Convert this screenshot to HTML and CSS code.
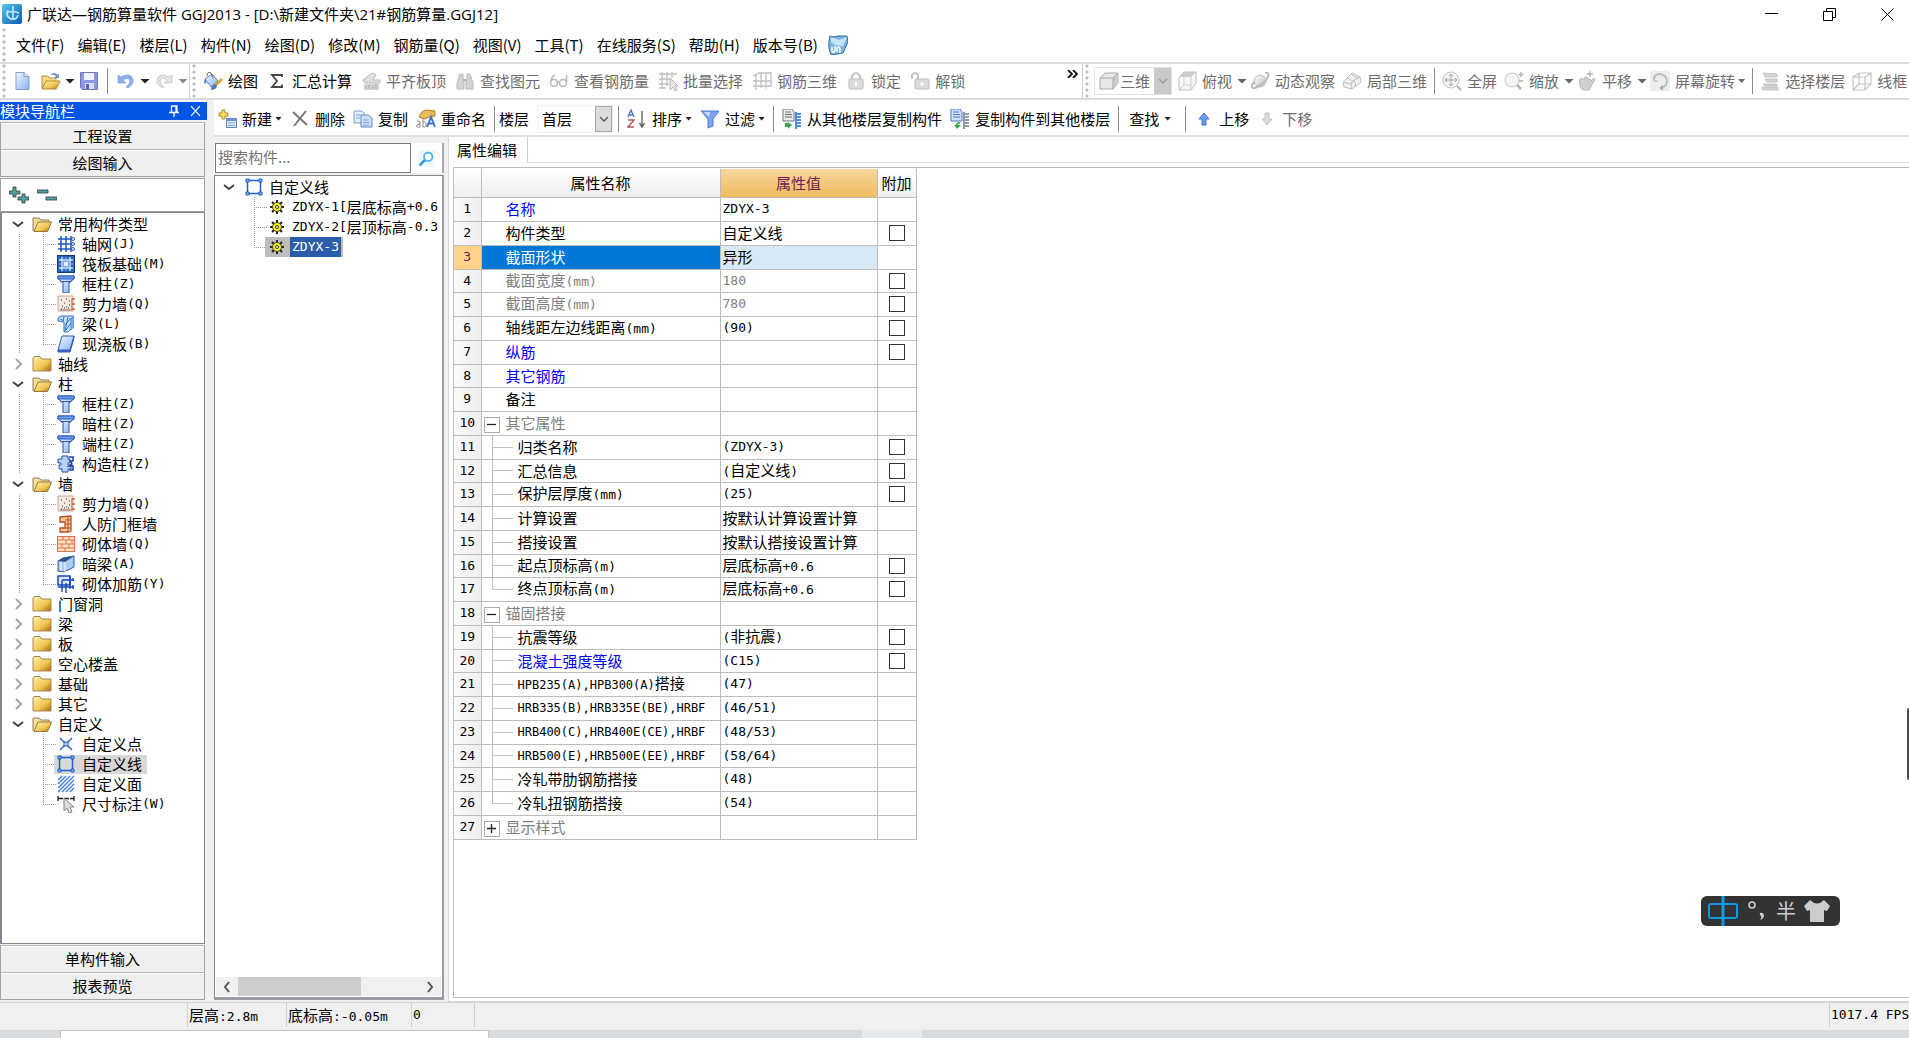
FILE: index.html
```html
<!DOCTYPE html>
<html lang="zh-CN">
<head>
<meta charset="utf-8">
<title>广联达—钢筋算量软件 GGJ2013</title>
<link rel="stylesheet" href="styles.css">
</head>
<body>
<svg class="defs" aria-hidden="true">
  <defs>
    <linearGradient id="gold" x1="0" y1="0" x2="1" y2="1"><stop offset="0" stop-color="#fff0b0"/><stop offset=".6" stop-color="#f2c550"/><stop offset="1" stop-color="#a86a10"/></linearGradient>
    <linearGradient id="blue" x1="0" y1="0" x2="1" y2="1"><stop offset="0" stop-color="#f4f9ff"/><stop offset="1" stop-color="#86b2f0"/></linearGradient>
    <linearGradient id="grey" x1="0" y1="0" x2="1" y2="1"><stop offset="0" stop-color="#fafafa"/><stop offset="1" stop-color="#c4c4c4"/></linearGradient>
    <linearGradient id="app" x1="0" y1="0" x2="1" y2="1"><stop offset="0" stop-color="#58c4f0"/><stop offset="1" stop-color="#0a5cae"/></linearGradient>
  </defs>
  <symbol id="i-app" viewBox="0 0 20 20"><rect width="20" height="20" rx="2" fill="url(#app)"/><path d="M11 2v14M4 9q7-3 13 0M6 6q-3 6 3 9 6 1 7-4" fill="none" stroke="#bfe8fb" stroke-width="1.6"/></symbol>
  <symbol id="i-doc" viewBox="0 0 20 20"><path d="M4 1.500h8l5 4v13H4z" fill="url(#blue)" stroke="#8a9cba"/><path d="M12 1.500v4h5" fill="#dbe7f8" stroke="#8a9cba"/></symbol>
  <symbol id="i-open" viewBox="0 0 20 20"><path d="M1 17V5h6l1.500 2H15v3" fill="#f6d98a" stroke="#b99337"/><path d="M1 18l4-8h14l-4 8z" fill="url(#gold)" stroke="#b98a2c"/><path d="M9 4q4-4 8 0l1-2v5h-5l2-2q-3-2-6-1" fill="#6f97c8"/></symbol>
  <symbol id="i-save" viewBox="0 0 20 20"><path d="M1.500 1.500h17v17h-15l-2-2z" fill="#8f97e2" stroke="#6d74c4"/><rect x="5" y="2" width="10" height="7" fill="#f1f3ff"/><rect x="6" y="12" width="9" height="6" fill="#d7dbf5"/><rect x="7" y="13" width="3" height="5" fill="#5b63b8"/></symbol>
  <symbol id="i-undo" viewBox="0 0 20 20"><path d="M2 4v8h8L7 9q6-4 7 1 0 3-4 6l2 1q6-4 5-9-3-7-12-2z" fill="#8bb0f0" stroke="#6d92d8" stroke-width=".6"/></symbol>
  <symbol id="i-redo" viewBox="0 0 20 20"><path d="M18 4v8h-8l3-3q-6-4-7 1 0 3 4 6l-2 1Q2 13 3 8q3-7 12-2z" fill="#e2e2e2" stroke="#c8c8c8" stroke-width=".8"/></symbol>
  <symbol id="i-paint" viewBox="0 0 20 20"><path d="M2 8l7-5 6 7-7 6z" fill="url(#blue)" stroke="#5f7fae"/><path d="M4 5q0-5 4-3l2 5" fill="none" stroke="#666"/><path d="M2 8q-2 4 0 5 2-1 1-4" fill="#5b84d2"/><path d="M19 8l-7 7" stroke="#d9a62e" stroke-width="2.500"/><path d="M12 13q-4 1-4 6 5 0 6-4z" fill="#4e78c8"/></symbol>
  <symbol id="i-sum" viewBox="0 0 20 20"><path d="M15 6V4H5l5 6-5 6h10v-2.500" fill="none" stroke="#444" stroke-width="1.800"/></symbol>
  <symbol id="i-slab" viewBox="0 0 20 20"><path d="M2 9l9-7 4 2-3 5h7v3H4z" fill="#dedede" stroke="#bbb"/><path d="M3 13h15v6H3z" fill="#d4d4d4"/><path d="M5 18v-3M8 18v-4M12 18v-3M15 18v-5" stroke="#aaa"/></symbol>
  <symbol id="i-find" viewBox="0 0 20 20"><path d="M5 3h3v5l1 2v8H2v-6zM12 3h3l3 9v6h-7v-8l1-2z" fill="#d4d4d4" stroke="#b8b8b8"/><path d="M8 9h4" stroke="#b4b4b4" stroke-width="2"/></symbol>
  <symbol id="i-glass" viewBox="0 0 20 20"><g fill="none" stroke="#bcbcbc" stroke-width="1.600"><circle cx="5" cy="12" r="3.500"/><circle cx="14" cy="12" r="3.500"/><path d="M8.500 11q1-1 2 0M1.500 11Q3 5 6 4M17.500 11V4"/></g></symbol>
  <symbol id="i-batch" viewBox="0 0 20 20"><path d="M1 3h18M1 8h12M1 13h10M4 1v17M9 1v14M14 1v6M1 17h7" stroke="#c0c0c0" fill="none" stroke-width="1.300"/><path d="M12 7v12l3-3 2 4 2-1-2-4h3z" fill="#e8e8e8" stroke="#b4b4b4"/></symbol>
  <symbol id="i-cage" viewBox="0 0 20 20"><path d="M1 5l6-3h12M1 10h18M1 15h18M4 3v16M9 1v16M14 2v16M19 1v15" stroke="#c0c0c0" fill="none" stroke-width="1.300"/></symbol>
  <symbol id="i-lock" viewBox="0 0 20 20"><path d="M6 9V5q4-6 8 0v4" fill="none" stroke="#c4c4c4" stroke-width="2"/><rect x="3" y="8" width="14" height="10" rx="1" fill="#dcdcdc" stroke="#bcbcbc"/><path d="M10 11v4M8.500 13h3" stroke="#fff" stroke-width="1.300"/></symbol>
  <symbol id="i-unlock" viewBox="0 0 20 20"><path d="M2 8V4q3-4 6 0v4" fill="none" stroke="#c4c4c4" stroke-width="2"/><rect x="5" y="8" width="14" height="10" rx="1" fill="#dcdcdc" stroke="#bcbcbc"/><path d="M12 11v4M10.500 13h3" stroke="#fff" stroke-width="1.300"/></symbol>
  <symbol id="i-cube" viewBox="0 0 20 20"><path d="M1 7l5-5h13v10l-5 6H1z" fill="#e8e8e8" stroke="#aaa"/><path d="M14 7l5-5v10l-5 6z" fill="#cacaca"/><path d="M1 7h13v11M14 7l5-5" fill="none" stroke="#aaa"/></symbol>
  <symbol id="i-cubetop" viewBox="0 0 20 20"><path d="M2 6l5-5h12v11l-5 7H2z" fill="#f6f6f6" stroke="#c0c0c0"/><path d="M2 6l5-5h12l-5 5z" fill="#ccc"/><path d="M14 6v13M7 6v8l-5 5M7 14h7" fill="none" stroke="#cfcfcf"/></symbol>
  <symbol id="i-orbit" viewBox="0 0 20 20"><circle cx="10" cy="10" r="6" fill="url(#grey)" stroke="#bbb"/><path d="M15 2q5-1 3 4-3 6-11 10-6 3-5-2 1-2 3-3" fill="none" stroke="#bcbcbc" stroke-width="2"/></symbol>
  <symbol id="i-part" viewBox="0 0 20 20"><path d="M1 11l9-9 8 4 1 5-9 7-8-2z" fill="#f0f0f0" stroke="#c0c0c0"/><path d="M5 7l8 4 1 5M9 3l8 5M10 18l-1-6 9-7M1 11l8 2" fill="none" stroke="#c0c0c0"/></symbol>
  <symbol id="i-full" viewBox="0 0 20 20"><circle cx="9" cy="9" r="8" fill="#f2f2f2" stroke="#c4c4c4"/><path d="M9 3v12M3 9h12M7 5l2-2 2 2M7 13l2 2 2-2M5 7L3 9l2 2M13 7l2 2-2 2" fill="none" stroke="#a8a8a8"/><path d="M15 15l4 4" stroke="#b4b4b4" stroke-width="2"/></symbol>
  <symbol id="i-zoom" viewBox="0 0 20 20"><circle cx="8" cy="9" r="7" fill="#f4f4f4" stroke="#c4c4c4"/><path d="M13 14l4 4" stroke="#b4b4b4" stroke-width="2.500"/><path d="M17 1v5M14.500 3.500h5M15 10h4" stroke="#b4b4b4" stroke-width="1.500"/></symbol>
  <symbol id="i-pan" viewBox="0 0 20 20"><path d="M3 8q3-2 4 1l1-3q3-1 3 2 3-1 3 2l3-3q2 1-1 5l-4 7H6q-5-4-3-11z" fill="#d0d0d0" stroke="#b8b8b8"/><path d="M13 0v6M10 3h6" stroke="#b4b4b4" stroke-width="1.300"/></symbol>
  <symbol id="i-rot" viewBox="0 0 20 20"><rect width="20" height="20" fill="#ededed"/><path d="M4 9q0-6 6-6 7 1 7 8-1 5-6 6" fill="none" stroke="#bbb" stroke-width="1.800"/><path d="M13 14l-4 3 4 3z" fill="#a8a8a8"/><path d="M4 5v5h4" fill="none" stroke="#b4b4b4"/></symbol>
  <symbol id="i-floors" viewBox="0 0 20 20"><path d="M3 2l14 1v3H5zM5 8h12v3H7zM3 13h14v2H5zM2 16h16v3H3z" fill="#d4d4d4" stroke="#b4b4b4" stroke-width=".7"/></symbol>
  <symbol id="i-wire" viewBox="0 0 20 20"><path d="M1 6l6-4h12v11l-6 6H1zM1 6h12v13M13 6l6-4M7 2v11h12M7 13l-6 6" fill="none" stroke="#c4c4c4" stroke-width="1.200"/></symbol>
  <symbol id="i-new" viewBox="0 0 20 20"><path d="M5 1h3v3h3v3H8v3H5V7H2V4h3z" fill="#ffe063" stroke="#a98b25"/><rect x="9.500" y="9.500" width="10" height="9" fill="#dbe8fb" stroke="#6788bd"/><path d="M10 11h9" stroke="#6a95e0" stroke-width="2"/><path d="M11 14h7M11 16.500h7" stroke="#8ba9d8"/></symbol>
  <symbol id="i-del" viewBox="0 0 20 20"><path d="M3 3l14 13M16 2L4 17" stroke="#777" stroke-width="2" fill="none"/></symbol>
  <symbol id="i-copy" viewBox="0 0 20 20"><path d="M1 2h8l3 3v9H1z" fill="#e2edfc" stroke="#7c9ed6"/><path d="M8 6h7l4 3v9H8z" fill="#cfe0f8" stroke="#5e86c9"/><path d="M10 11h6M10 13.500h6M10 16h6M3 6h4M3 9h4" stroke="#7fa2dc"/></symbol>
  <symbol id="i-ren" viewBox="0 0 20 20"><path d="M3 8q2-6 7-7l9 1v5l-6 1-4 2z" fill="#e8bb57" stroke="#a98235"/><path d="M1 12q3-1 3 2v4q-4 1-3-2l3-1M7 9v9q4 0 3-4-1-2-3-1" fill="none" stroke="#888"/><path d="M11 18l4-10 4 10M12.500 14.500h5" fill="none" stroke="#3f77d0" stroke-width="2"/></symbol>
  <symbol id="i-az" viewBox="0 0 20 20"><path d="M1 8l3-7 3 7M2 6h4" fill="none" stroke="#4b79c7" stroke-width="1.400"/><path d="M1 11h6l-6 7h6" fill="none" stroke="#b9575a" stroke-width="1.500"/><path d="M15 2v15M12.500 14l2.500 4 2.500-4" fill="none" stroke="#555" stroke-width="1.300"/></symbol>
  <symbol id="i-funnel" viewBox="0 0 20 20"><path d="M1 2h18l-6 8v7l-5 2v-9z" fill="#7ea6ee" stroke="#4f7bd0"/><path d="M4 3h6l-1 5z" fill="#c8dcff"/></symbol>
  <symbol id="i-from" viewBox="0 0 20 20"><path d="M1 0h9l2 3v9H1z" fill="#ececec" stroke="#777"/><path d="M3 3h6M3 5.500h7M3 8h7" stroke="#666"/><path d="M14 5h5M14 8h5M14 11h5M14 14h5M14 17h5" stroke="#4d8be0" stroke-width="2"/><path d="M14 3v17" stroke="#4d8be0" stroke-width="2"/><path d="M3 14h3v-1l4 3-4 4v-2H3z" fill="#3da64e"/></symbol>
  <symbol id="i-to" viewBox="0 0 20 20"><path d="M1 0h9l2 3v9H1z" fill="#cfe0fb" stroke="#4d79c9"/><path d="M3 3h6M3 5.500h7M3 8h7" stroke="#4d79c9"/><path d="M14 5h5M14 8h5M14 11h5M14 14h5M14 17h5" stroke="#909aa5" stroke-width="2"/><path d="M14 3v17" stroke="#909aa5" stroke-width="2"/><path d="M10 13q-4 0-4 3H4l3 4 4-4H8q0-2 2-1z" fill="#3da64e"/></symbol>
  <symbol id="i-up" viewBox="0 0 20 20"><path d="M10 4l5 6h-3v6H8v-6H5z" fill="#6d9cf2" stroke="#3c6fd0"/></symbol>
  <symbol id="i-down" viewBox="0 0 20 20"><path d="M10 16l5-6h-3V4H8v6H5z" fill="#dadada" stroke="#c2c2c2"/></symbol>
  <symbol id="i-cart" viewBox="0 0 20 20"><path d="M2 1l4 1 4-1h9l1 6-5 11-12 2q-4-8-1-19z" fill="#7db7df" stroke="#33709c"/><path d="M3 2l8 3 8-3-4 9-8-1-4-3z" fill="#c5e6f7"/><path d="M4 12v4q2 3 3-1v-4M9 17v-4q2-3 3 1v4" fill="none" stroke="#fff" stroke-width="1.500"/></symbol>
  <symbol id="i-search" viewBox="0 0 20 20"><rect width="20" height="20" fill="#eef7fc"/><circle cx="12" cy="8" r="5" fill="#fff" stroke="#45b0ea" stroke-width="2"/><path d="M8 12l-6 6" stroke="#2b96dc" stroke-width="3"/></symbol>
  <symbol id="i-fopen" viewBox="0 0 20 16"><path d="M1 15V2h6l2 2h8v3" fill="#f6dc8e" stroke="#8d7f66"/><path d="M2 15.500L6 6h13.500l-4 9.500z" fill="url(#gold)" stroke="#97793a"/></symbol>
  <symbol id="i-fold" viewBox="0 0 20 16"><path d="M1 15V2l1-1.500h6L9.500 3H19v12z" fill="url(#gold)" stroke="#a18a55"/></symbol>
  <symbol id="i-grid" viewBox="0 0 18 18"><path d="M4 1v16M9 1v16M14 1v16M1 4h13M1 9h13M1 14h13" stroke="#1d57c0" stroke-width="1.500"/><g fill="#fff" stroke="#1d57c0"><circle cx="16" cy="4" r="1.500"/><circle cx="16" cy="9" r="1.500"/><circle cx="16" cy="14" r="1.500"/></g></symbol>
  <symbol id="i-raft" viewBox="0 0 18 18"><rect x=".5" y=".5" width="17" height="17" fill="#2a66b4" stroke="#0f3c79"/><path d="M5 2v14M13 2v14M2 5h14M2 13h14" stroke="#dcebff" stroke-width="1.300"/><path d="M9 2v3M9 13v3M2 9h3M13 9h3" stroke="#9cc2f5"/><rect x="6.500" y="6.500" width="5" height="5" fill="#e8f2ff" stroke="#7aa7e6"/></symbol>
  <symbol id="i-col" viewBox="0 0 18 18"><path d="M1 1h16v3l-3 2v1h-2v11H6V7H4V6L1 4z" fill="url(#blue)" stroke="#2450b0"/><path d="M1 1h16v3H1z" fill="#6d9bea" stroke="#2b5fc2"/><path d="M4 6.500h10" stroke="#2b5fc2"/></symbol>
  <symbol id="i-wall" viewBox="0 0 18 18"><path d="M1 1h15v15H1z" fill="#efe9e4" stroke="#e0a184"/><path d="M3 15h12M15 3v12" stroke="#b8a79c" stroke-width="2"/><path d="M4 5h1M7 8h1M5 11h1M9 4h1M9 12h1M12 10h1M11 13h1M7 13h1M4 14h1M12 6h1" stroke="#333" stroke-width="1.200"/><path d="M15 4h3M15 9h3M15 14h3" stroke="#d9602a" stroke-width="1.400"/></symbol>
  <symbol id="i-beam" viewBox="0 0 18 18"><path d="M1 3l3-2h13l-3 3v10l-3 3H7V7L1 6z" fill="#c9e0fb" stroke="#2c73c7"/><path d="M3 4l4 2M7 2l-1 4M11 2L8 16M14 3L8 10M14 8l-5 7" stroke="#2c73c7" fill="none"/><path d="M14 4l3-3v12l-3 2z" fill="#6ea6ea"/></symbol>
  <symbol id="i-slabb" viewBox="0 0 18 18"><path d="M1 15v2h12l4-14V1" fill="#3e70d0" stroke="#2b57b6"/><path d="M5 1h12l-4 14H1z" fill="url(#blue)" stroke="#2b57b6"/></symbol>
  <symbol id="i-gz" viewBox="0 0 18 18"><path d="M5 1h6v3h2v4h-2v2h3v4h-3v3H5v-3H2v-4h2V8H1V4h4z" fill="#b8d2f7" stroke="#2450b0"/><path d="M12 2h4v4h-3l2 3-3 2h4v4h-4" fill="none" stroke="#1b3fa5" stroke-width="1.500"/></symbol>
  <symbol id="i-door" viewBox="0 0 18 18"><path d="M3 2l11-1v15l-3 1H3v-4h5V7H3z" fill="#f3c9a4" stroke="#b5511d" stroke-width="1.300"/><path d="M8 5h6M8 9h6M8 13h6M11 1v16" stroke="#b5511d"/></symbol>
  <symbol id="i-brick" viewBox="0 0 18 18"><rect x=".5" y="1.500" width="17" height="15" fill="#fbe0cc" stroke="#d8743f"/><path d="M1 5h17M1 9h17M1 13h17M6 1v4M12 1v4M9 5v4M15 5v4M5 9v4M12 9v4M8 13v4" stroke="#d8743f"/></symbol>
  <symbol id="i-hid" viewBox="0 0 18 18"><path d="M1 6l5-3 11-2v11l-10 5-6-1z" fill="#a9cbf4" stroke="#2f5d9e"/><path d="M1 6l5-3 11-2-9 6z" fill="#2d4f8e"/><path d="M8 7v10M4 7v9" stroke="#fff"/></symbol>
  <symbol id="i-rein" viewBox="0 0 18 18"><path d="M1 1h12v9H1z" fill="#dce8ff" stroke="#1746bb" stroke-width="1.500"/><path d="M5 5h12M1 12h16M5 5v12M9 8v10M13 1v13M16 3v3M16 10v4" fill="none" stroke="#1746bb" stroke-width="1.400"/></symbol>
  <symbol id="i-pt" viewBox="0 0 18 18"><path d="M3 3l12 12M15 3L3 15" stroke="#2f6fc8" stroke-width="1.500"/><rect x="7" y="7" width="4" height="4" fill="#bcd8ff" stroke="#1d57c0"/></symbol>
  <symbol id="i-sq" viewBox="0 0 18 18"><path d="M2.500 2.500h13v13h-13z" fill="none" stroke="#1b62d0" stroke-width="1.500"/><g fill="#8cb6f5" stroke="#1b5ac4"><path d="M1 1h3v3H1zM14 1h3v3h-3zM1 14h3v3H1zM14 14h3v3h-3z"/></g></symbol>
  <symbol id="i-hatch" viewBox="0 0 18 18"><path d="M1 5l4-4M1 9l8-8M1 13l12-12M1 17L17 1M5 17L17 5M9 17l8-8M13 17l4-4" stroke="#3f7ae0" stroke-width="1.300"/></symbol>
  <symbol id="i-dim" viewBox="0 0 18 18"><path d="M1 1v5M17 1v5M1 3.500h16" stroke="#222" stroke-width="1.300" stroke-dasharray="5 1"/><path d="M7 3v13l3-3 2 5 3-1-2-5h4z" fill="#ddd" stroke="#888"/></symbol>
  <symbol id="i-gear" viewBox="0 0 14 14"><path d="M7 0v14M0 7h14M2 2l10 10M12 2L2 12" stroke="#222" stroke-width="2"/><circle cx="7" cy="7" r="4.500" fill="#f6ea18" stroke="#4a4600"/><circle cx="7" cy="7" r="1.500" fill="#fff" stroke="#333"/></symbol>
  <symbol id="i-dn" viewBox="0 0 12 12"><path d="M1 4l5 4 5-4" fill="none" stroke="#444" stroke-width="2"/></symbol>
  <symbol id="i-rt" viewBox="0 0 12 12"><path d="M4 1l5 5-5 5" fill="none" stroke="#a5a5a5" stroke-width="2"/></symbol>
  <symbol id="i-shirt" viewBox="0 0 26 22"><path d="M6 0q7 7 14 0l6 6-3 5-3-1v12H6V10l-3 1-3-5z" fill="#ccc"/></symbol>
</svg>

<header class="titlebar">
  <svg class="ic"><use href="#i-app"/></svg>
  <h1>广联达—钢筋算量软件 GGJ2013 - [D:\新建文件夹\21#钢筋算量.GGJ12]</h1>
  <div class="winctl">
    <button aria-label="最小化"><svg viewBox="0 0 13 13"><path d="M0 5.500h13" stroke="#000"/></svg></button>
    <button aria-label="还原"><svg viewBox="0 0 13 13"><path d="M.5 3.500h9v9h-9zM3.500 3V.5h9v9H10" fill="none" stroke="#000"/></svg></button>
    <button aria-label="关闭"><svg viewBox="0 0 13 13"><path d="M.5.500l12 12M12.500.500l-12 12" fill="none" stroke="#000"/></svg></button>
  </div>
</header>

<nav class="menubar">
  <button>文件(F)</button><button>编辑(E)</button><button>楼层(L)</button><button>构件(N)</button><button>绘图(D)</button><button>修改(M)</button><button>钢筋量(Q)</button><button>视图(V)</button><button>工具(T)</button><button>在线服务(S)</button><button>帮助(H)</button><button>版本号(B)</button>
  <svg class="ic"><use href="#i-cart"/></svg>
</nav>

<div class="toolrow">
  <div class="quick grip">
    <button class="first" aria-label="新建工程"><svg class="ic"><use href="#i-doc"/></svg></button>
    <button aria-label="打开"><svg class="ic"><use href="#i-open"/></svg><span class="caret big"></span></button>
    <button aria-label="保存"><svg class="ic"><use href="#i-save"/></svg></button>
    <span class="sep"></span>
    <button aria-label="撤销"><svg class="ic"><use href="#i-undo"/></svg><span class="caret big"></span></button>
    <button aria-label="恢复"><svg class="ic"><use href="#i-redo"/></svg><span class="caret big dim"></span></button>
  </div>
  <div class="tools draw grip">
    <button><svg class="ic"><use href="#i-paint"/></svg>绘图</button>
    <button><svg class="ic"><use href="#i-sum"/></svg>汇总计算</button>
    <button disabled><svg class="ic"><use href="#i-slab"/></svg>平齐板顶</button>
    <button disabled><svg class="ic"><use href="#i-find"/></svg>查找图元</button>
    <button disabled><svg class="ic"><use href="#i-glass"/></svg>查看钢筋量</button>
    <button disabled><svg class="ic"><use href="#i-batch"/></svg>批量选择</button>
    <button disabled><svg class="ic"><use href="#i-cage"/></svg>钢筋三维</button>
    <button disabled><svg class="ic"><use href="#i-lock"/></svg>锁定</button>
    <button disabled><svg class="ic"><use href="#i-unlock"/></svg>解锁</button>
    <button class="more" aria-label="更多"><svg viewBox="0 0 11 8"><path d="M1 0l4 4-4 4M6 0l4 4-4 4" fill="none" stroke="#111" stroke-width="1.800"/></svg></button>
  </div>
  <div class="tools view grip">
    <button class="combo" disabled><svg class="ic"><use href="#i-cube"/></svg><span>三维</span><span class="drop"><svg viewBox="0 0 12 12"><path d="M2 4l4 4 4-4" fill="none" stroke="#999" stroke-width="1.500"/></svg></span></button>
    <button class="split" disabled><svg class="ic"><use href="#i-cubetop"/></svg>俯视<span class="caret big"></span></button>
    <button disabled><svg class="ic"><use href="#i-orbit"/></svg>动态观察</button>
    <button disabled><svg class="ic"><use href="#i-part"/></svg>局部三维</button>
    <span class="sep"></span>
    <button disabled><svg class="ic"><use href="#i-full"/></svg>全屏</button>
    <button class="split" disabled><svg class="ic"><use href="#i-zoom"/></svg>缩放<span class="caret big"></span></button>
    <button class="split" disabled><svg class="ic"><use href="#i-pan"/></svg>平移<span class="caret big"></span></button>
    <button disabled><svg class="ic"><use href="#i-rot"/></svg>屏幕旋转<span class="caret near dim"></span></button>
    <span class="sep"></span>
    <button disabled><svg class="ic"><use href="#i-floors"/></svg>选择楼层</button>
    <button disabled><svg class="ic"><use href="#i-wire"/></svg>线框</button>
  </div>
</div>

<main>
  <aside class="nav">
    <div class="navhead"><h2>模块导航栏</h2>
      <button aria-label="固定"><svg viewBox="0 0 12 12"><path d="M3 1h6v6M3.500 1v6M8 1v6M1 7.500h10M6 8v4" fill="none" stroke="#fff" stroke-width="1.300"/></svg></button>
      <button aria-label="关闭导航"><svg viewBox="0 0 12 12"><path d="M1 1l9 10M10 1L1 11" stroke="#dce8ff" stroke-width="1.200"/></svg></button>
    </div>
    <button class="bar">工程设置</button>
    <button class="bar">绘图输入</button>
    <div class="expand">
      <button aria-label="全部展开"><svg width="20" height="18" viewBox="0 0 20 18"><path d="M4 1h3v4h4v3H7v3H4V8H0V5h4zM13 8h3v3h4v3h-4v3h-3v-3H9v-3h4z" fill="#4fa3a3" stroke="#333" stroke-width=".8"/></svg></button>
      <button aria-label="全部折叠"><svg width="20" height="18" viewBox="0 0 20 18"><path d="M0 4h11v3H0zM9 11h11v3H9z" fill="#4fa3a3" stroke="#333" stroke-width=".8"/></svg></button>
    </div>
    <ul class="tree">
      <li><div class="node"><svg class="chev"><use href="#i-dn"/></svg><svg class="fold"><use href="#i-fopen"/></svg>常用构件类型</div>
        <ul>
          <li><span class="lbl"><svg><use href="#i-grid"/></svg>轴网<span class="m">(J)</span></span></li>
          <li><span class="lbl"><svg><use href="#i-raft"/></svg>筏板基础<span class="m">(M)</span></span></li>
          <li><span class="lbl"><svg><use href="#i-col"/></svg>框柱<span class="m">(Z)</span></span></li>
          <li><span class="lbl"><svg><use href="#i-wall"/></svg>剪力墙<span class="m">(Q)</span></span></li>
          <li><span class="lbl"><svg><use href="#i-beam"/></svg>梁<span class="m">(L)</span></span></li>
          <li><span class="lbl"><svg><use href="#i-slabb"/></svg>现浇板<span class="m">(B)</span></span></li>
        </ul></li>
      <li><div class="node"><svg class="chev"><use href="#i-rt"/></svg><svg class="fold"><use href="#i-fold"/></svg>轴线</div></li>
      <li><div class="node"><svg class="chev"><use href="#i-dn"/></svg><svg class="fold"><use href="#i-fopen"/></svg>柱</div>
        <ul>
          <li><span class="lbl"><svg><use href="#i-col"/></svg>框柱<span class="m">(Z)</span></span></li>
          <li><span class="lbl"><svg><use href="#i-col"/></svg>暗柱<span class="m">(Z)</span></span></li>
          <li><span class="lbl"><svg><use href="#i-col"/></svg>端柱<span class="m">(Z)</span></span></li>
          <li><span class="lbl"><svg><use href="#i-gz"/></svg>构造柱<span class="m">(Z)</span></span></li>
        </ul></li>
      <li><div class="node"><svg class="chev"><use href="#i-dn"/></svg><svg class="fold"><use href="#i-fopen"/></svg>墙</div>
        <ul>
          <li><span class="lbl"><svg><use href="#i-wall"/></svg>剪力墙<span class="m">(Q)</span></span></li>
          <li><span class="lbl"><svg><use href="#i-door"/></svg>人防门框墙</span></li>
          <li><span class="lbl"><svg><use href="#i-brick"/></svg>砌体墙<span class="m">(Q)</span></span></li>
          <li><span class="lbl"><svg><use href="#i-hid"/></svg>暗梁<span class="m">(A)</span></span></li>
          <li><span class="lbl"><svg><use href="#i-rein"/></svg>砌体加筋<span class="m">(Y)</span></span></li>
        </ul></li>
      <li><div class="node"><svg class="chev"><use href="#i-rt"/></svg><svg class="fold"><use href="#i-fold"/></svg>门窗洞</div></li>
      <li><div class="node"><svg class="chev"><use href="#i-rt"/></svg><svg class="fold"><use href="#i-fold"/></svg>梁</div></li>
      <li><div class="node"><svg class="chev"><use href="#i-rt"/></svg><svg class="fold"><use href="#i-fold"/></svg>板</div></li>
      <li><div class="node"><svg class="chev"><use href="#i-rt"/></svg><svg class="fold"><use href="#i-fold"/></svg>空心楼盖</div></li>
      <li><div class="node"><svg class="chev"><use href="#i-rt"/></svg><svg class="fold"><use href="#i-fold"/></svg>基础</div></li>
      <li><div class="node"><svg class="chev"><use href="#i-rt"/></svg><svg class="fold"><use href="#i-fold"/></svg>其它</div></li>
      <li><div class="node"><svg class="chev"><use href="#i-dn"/></svg><svg class="fold"><use href="#i-fopen"/></svg>自定义</div>
        <ul>
          <li><span class="lbl"><svg><use href="#i-pt"/></svg>自定义点</span></li>
          <li><span class="lbl on"><svg><use href="#i-sq"/></svg>自定义线</span></li>
          <li><span class="lbl"><svg><use href="#i-hatch"/></svg>自定义面</span></li>
          <li><span class="lbl"><svg><use href="#i-dim"/></svg>尺寸标注<span class="m">(W)</span></span></li>
        </ul></li>
    </ul>
    <button class="bar">单构件输入</button>
    <button class="bar">报表预览</button>
  </aside>

  <section class="work">
    <div class="tools edit">
      <button class="drops"><svg class="ic"><use href="#i-new"/></svg>新建<span class="caret"></span></button>
      <button><svg class="ic"><use href="#i-del"/></svg>删除</button>
      <button><svg class="ic"><use href="#i-copy"/></svg>复制</button>
      <button><svg class="ic"><use href="#i-ren"/></svg>重命名</button>
      <span class="sep"></span>
      <label class="floor" for="floor">楼层</label>
      <div class="pick"><select id="floor"><option>首层</option></select><span class="drop"><svg viewBox="0 0 12 12"><path d="M2 4l4 4 4-4" fill="none" stroke="#555" stroke-width="1.300"/></svg></span></div>
      <span class="sep"></span>
      <button class="drops"><svg class="ic"><use href="#i-az"/></svg>排序<span class="caret"></span></button>
      <button class="drops"><svg class="ic"><use href="#i-funnel"/></svg>过滤<span class="caret"></span></button>
      <span class="sep"></span>
      <button><svg class="ic"><use href="#i-from"/></svg>从其他楼层复制构件</button>
      <button><svg class="ic"><use href="#i-to"/></svg>复制构件到其他楼层</button>
      <span class="sep"></span>
      <button class="look">查找<span class="caret"></span></button>
      <span class="sep"></span>
      <button><svg class="ic"><use href="#i-up"/></svg>上移</button>
      <button class="off" disabled><svg class="ic"><use href="#i-down"/></svg>下移</button>
    </div>
    <div class="panes">
      <div class="parts">
        <div class="search"><input type="text" placeholder="搜索构件..." aria-label="搜索构件"><button aria-label="搜索"><svg class="ic"><use href="#i-search"/></svg></button></div>
        <div class="partbox">
          <ul class="tree">
            <li><div class="node"><svg class="chev"><use href="#i-dn"/></svg><svg class="sq"><use href="#i-sq"/></svg>自定义线</div>
              <ul>
                <li><svg><use href="#i-gear"/></svg><span class="lbl"><span class="m">ZDYX-1[</span>层底标高<span class="m">+0.6</span></span></li>
                <li><svg><use href="#i-gear"/></svg><span class="lbl"><span class="m">ZDYX-2[</span>层顶标高<span class="m">-0.3</span></span></li>
                <li class="cur"><svg><use href="#i-gear"/></svg><span class="lbl"><span class="m">ZDYX-3</span></span></li>
              </ul></li>
          </ul>
          <div class="hscroll"><button aria-label="向左"><svg viewBox="0 0 12 12"><path d="M8 1L4 6l4 5" fill="none" stroke="#555" stroke-width="2"/></svg></button><div class="track"><div class="thumb"></div></div><button aria-label="向右"><svg viewBox="0 0 12 12"><path d="M4 1l4 5-4 5" fill="none" stroke="#555" stroke-width="2"/></svg></button></div>
        </div>
      </div>
      <div class="props">
        <div class="tabs"><button>属性编辑</button></div>
        <div class="sheet">
          <table>
            <colgroup><col class="c1"><col class="c2"><col class="c3"><col class="c4"></colgroup>
            <thead><tr><th></th><th>属性名称</th><th class="hot">属性值</th><th>附加</th></tr></thead>
            <tbody>
              <tr><th class="m">1</th><td class="key">名称</td><td class="m">ZDYX-3</td><td></td></tr>
              <tr><th class="m">2</th><td>构件类型</td><td>自定义线</td><td><input type="checkbox" aria-label="附加 构件类型"></td></tr>
              <tr class="sel"><th class="m">3</th><td>截面形状</td><td>异形</td><td></td></tr>
              <tr class="ro"><th class="m">4</th><td>截面宽度<span class="m">(mm)</span></td><td class="m">180</td><td><input type="checkbox" aria-label="附加 截面宽度"></td></tr>
              <tr class="ro"><th class="m">5</th><td>截面高度<span class="m">(mm)</span></td><td class="m">780</td><td><input type="checkbox" aria-label="附加 截面高度"></td></tr>
              <tr><th class="m">6</th><td>轴线距左边线距离<span class="m">(mm)</span></td><td class="m">(90)</td><td><input type="checkbox" aria-label="附加 轴线距左边线距离"></td></tr>
              <tr><th class="m">7</th><td class="key">纵筋</td><td></td><td><input type="checkbox" aria-label="附加 纵筋"></td></tr>
              <tr><th class="m">8</th><td class="key">其它钢筋</td><td></td><td></td></tr>
              <tr><th class="m">9</th><td>备注</td><td></td><td></td></tr>
              <tr class="grp"><th class="m">10</th><td><button aria-label="折叠"><svg viewBox="0 0 13 13"><path d="M2 6.500h9" stroke="#222" stroke-width="1.300"/></svg></button>其它属性</td><td></td><td></td></tr>
              <tr class="sub"><th class="m">11</th><td>归类名称</td><td class="m">(ZDYX-3)</td><td><input type="checkbox" aria-label="附加 归类名称"></td></tr>
              <tr class="sub"><th class="m">12</th><td>汇总信息</td><td><span class="m">(</span>自定义线<span class="m">)</span></td><td><input type="checkbox" aria-label="附加 汇总信息"></td></tr>
              <tr class="sub"><th class="m">13</th><td>保护层厚度<span class="m">(mm)</span></td><td class="m">(25)</td><td><input type="checkbox" aria-label="附加 保护层厚度"></td></tr>
              <tr class="sub"><th class="m">14</th><td>计算设置</td><td>按默认计算设置计算</td><td></td></tr>
              <tr class="sub"><th class="m">15</th><td>搭接设置</td><td>按默认搭接设置计算</td><td></td></tr>
              <tr class="sub"><th class="m">16</th><td>起点顶标高<span class="m">(m)</span></td><td>层底标高<span class="m">+0.6</span></td><td><input type="checkbox" aria-label="附加 起点顶标高"></td></tr>
              <tr class="sub last"><th class="m">17</th><td>终点顶标高<span class="m">(m)</span></td><td>层底标高<span class="m">+0.6</span></td><td><input type="checkbox" aria-label="附加 终点顶标高"></td></tr>
              <tr class="grp"><th class="m">18</th><td><button aria-label="折叠"><svg viewBox="0 0 13 13"><path d="M2 6.500h9" stroke="#222" stroke-width="1.300"/></svg></button>锚固搭接</td><td></td><td></td></tr>
              <tr class="sub"><th class="m">19</th><td>抗震等级</td><td><span class="m">(</span>非抗震<span class="m">)</span></td><td><input type="checkbox" aria-label="附加 抗震等级"></td></tr>
              <tr class="sub"><th class="m">20</th><td class="key">混凝土强度等级</td><td class="m">(C15)</td><td><input type="checkbox" aria-label="附加 混凝土强度等级"></td></tr>
              <tr class="sub"><th class="m">21</th><td><span class="m long">HPB235(A),HPB300(A)</span>搭接</td><td class="m">(47)</td><td></td></tr>
              <tr class="sub"><th class="m">22</th><td class="m long">HRB335(B),HRB335E(BE),HRBF</td><td class="m">(46/51)</td><td></td></tr>
              <tr class="sub"><th class="m">23</th><td class="m long">HRB400(C),HRB400E(CE),HRBF</td><td class="m">(48/53)</td><td></td></tr>
              <tr class="sub"><th class="m">24</th><td class="m long">HRB500(E),HRB500E(EE),HRBF</td><td class="m">(58/64)</td><td></td></tr>
              <tr class="sub"><th class="m">25</th><td>冷轧带肋钢筋搭接</td><td class="m">(48)</td><td></td></tr>
              <tr class="sub last"><th class="m">26</th><td>冷轧扭钢筋搭接</td><td class="m">(54)</td><td></td></tr>
              <tr class="grp"><th class="m">27</th><td><button aria-label="展开"><svg viewBox="0 0 13 13"><path d="M2 6.500h9M6.500 2v9" stroke="#222" stroke-width="1.300"/></svg></button>显示样式</td><td></td><td></td></tr>
            </tbody>
          </table>
        </div>
      </div>
    </div>
  </section>
</main>

<footer class="status">
  <span class="s0"></span>
  <span class="s1">层高<span class="m">:2.8m</span></span>
  <span class="s2">底标高<span class="m">:-0.05m</span></span>
  <span class="s3 m">0</span>
  <span class="s4"></span>
  <span class="s5 m">1017.4 FPS</span>
</footer>
<div class="under"><span class="sheet1"></span><span class="sheet2"></span></div>

<div class="ime">
  <svg class="zh" viewBox="0 0 30 30" role="img" aria-label="中文"><rect x="1" y="8" width="28" height="14" rx="2" fill="none" stroke="#0a9be6" stroke-width="2"/><path d="M15 0v30" stroke="#0a9be6" stroke-width="3"/></svg>
  <svg class="punct" viewBox="0 0 18 22" aria-hidden="true"><circle cx="4" cy="5" r="3" fill="none" stroke="#ccc" stroke-width="1.500"/><path d="M12 13q3-1 4 2 0 4-4 5 2-2 1-4-2-1-1-3z" fill="#ccc"/></svg>
  <span>半</span>
  <svg class="shirt"><use href="#i-shirt"/></svg>
</div>
<div class="handle"></div>
</body>
</html>
```

FILE: styles.css
```css
* { box-sizing: border-box; }
body {
  margin: 0;
  height: 100vh;
  display: flex;
  flex-direction: column;
  overflow: hidden;
  background: #f0f0f0;
  color: #000;
  font: 15px/20px "Noto Sans CJK SC", sans-serif;
}
button { margin: 0; padding: 0; border: 0; background: none; font: inherit; color: inherit; white-space: nowrap; }
button:disabled { color: #6d6d6d; }
h1, h2 { margin: 0; font: inherit; }
ul { margin: 0; padding: 0; list-style: none; }
svg { display: block; flex: none; }
.defs { position: absolute; width: 0; height: 0; }
.ic { width: 20px; height: 20px; }
.m { font-family: "DejaVu Sans Mono", monospace; font-size: 13px; }
.m.long { font-size: 12px; }

.titlebar { flex: none; height: 28px; display: flex; align-items: center; padding: 0 15px 0 2px; gap: 5px; background: #fff; }
.titlebar h1 { flex: 1; white-space: nowrap; font-family: "Open Sans", "Noto Sans CJK SC", sans-serif; }
.winctl { display: flex; gap: 45px; }
.winctl svg { width: 13px; height: 13px; }

.menubar { flex: none; height: 36px; display: flex; align-items: center; gap: 13px; padding-left: 16px; border-bottom: 2px solid #dedede; white-space: nowrap; }
.menubar .ic { margin-left: -3px; }
.grip, .menubar { background: radial-gradient(circle, #bbb 1px, transparent 2px) 2px 5px / 4px 6px repeat-y, #fff; }

.toolrow { flex: none; height: 36px; display: grid; grid-template-columns: 189px 893fr 827fr; background: #fff; border-bottom: 2px solid #dadada; }
.toolrow > div { min-width: 0; overflow: hidden; display: flex; align-items: center; }
.toolrow > div + div { border-left: 1px solid #d0d0d0; }
.quick { padding-left: 12px; gap: 4px; }
.quick button { display: flex; align-items: center; gap: 4px; }
.quick .first { margin-right: 5px; }
.quick .sep { margin: 0 4px; }
.sep { flex: none; width: 1px; height: 26px; background: #8c8c8c; }
.caret { flex: none; width: 7px; height: 4px; background: #222; clip-path: polygon(0 0, 100% 0, 50% 100%); }
.caret.big { width: 10px; height: 5px; }
.caret.dim { background: #888; }
button:disabled .caret { background: #666; }
.tools { align-items: center; }
.tools button { flex: none; display: flex; align-items: center; gap: 5px; }
.draw { gap: 9px; padding-left: 13px; }
.draw .more { margin: 0 4px 14px auto; }
.more svg { width: 11px; height: 8px; }
.view { gap: 7px; padding-left: 11px; }
.view .split { margin-right: -4px; }
.view .caret.near { margin-left: -2px; }
.tools .combo { height: 28px; margin-right: -2px; padding-left: 4px; gap: 1px; border: 1px solid #e2e2e2; }
.drop { flex: none; width: 17px; height: 26px; display: flex; align-items: center; justify-content: center; background: #cacaca; }
.combo .drop { margin-left: 3px; }
.drop svg { width: 12px; height: 12px; }

main { flex: 1; min-height: 0; display: flex; gap: 7px; }
.nav { flex: none; width: 207px; padding: 2px 2px 3px 0; display: flex; flex-direction: column; }
.navhead { height: 18px; margin: 0 -2px 2px 0; display: flex; align-items: center; gap: 10px; padding-right: 5px; background: #0055e5; color: #fff; line-height: 18px; }
.navhead h2 { flex: 1; }
.navhead svg { width: 12px; height: 12px; }
.bar { flex: none; height: 28px; border: 1px solid #a2a2a2; border-top-color: #b8b8b8; margin-bottom: -1px; background: #efefef; box-shadow: inset 0 1px #fff; text-align: center; }
.nav .tree + .bar { margin-top: 1px; }
.expand { flex: none; height: 34px; margin-top: 2px; display: flex; align-items: center; gap: 8px; padding-left: 8px; background: #fff; border: 1px solid #a2a2a2; }
.nav .tree { flex: 1; min-height: 0; background: #fff; border: 1px solid #828790; border-left-width: 2px; padding-top: 1px; }
.tree { white-space: nowrap; overflow: hidden; }
.node { display: flex; align-items: center; height: 20px; padding-left: 10px; }
.chev { width: 12px; height: 12px; margin-right: 8px; }
.fold { width: 20px; height: 16px; margin-right: 6px; }
.nav .tree > li:not(:last-child) > ul { background: repeating-linear-gradient(#999 0 1px, transparent 1px 2px) 17px 0 / 1px 100% no-repeat; }
.tree ul li {
  height: 20px;
  display: flex;
  align-items: center;
  background:
    repeating-linear-gradient(90deg, #999 0 1px, transparent 1px 2px) 41px 50% / 14px 1px no-repeat,
    repeating-linear-gradient(#999 0 1px, transparent 1px 2px) 41px 0 / 1px 100% no-repeat;
  padding-left: 52px;
}
.tree ul li:last-child { background-size: 14px 1px, 1px 50%; }
.lbl { display: flex; align-items: center; height: 19px; padding: 0 5px 0 3px; }
.lbl svg { width: 18px; height: 18px; margin-right: 7px; }
.lbl.on { background: #d8d8d8; }

.work { flex: 1; min-width: 0; display: flex; flex-direction: column; }
.edit { flex: none; height: 37px; display: flex; gap: 8px; padding: 2px 0 0 3px; background: #fff; border-bottom: 2px solid #e0e0e0; overflow: hidden; white-space: nowrap; }
.tools .drops { gap: 3px; }
.drops .ic { margin-right: 2px; }
.floor { margin-left: -4px; }
.pick { width: 76px; height: 28px; display: flex; margin-right: -3px; border: 1px solid #eee; }
.pick select { flex: 1; min-width: 0; padding: 0 0 0 4px; border: 0; border-radius: 0; appearance: none; background: #fff; font: inherit; color: #000; }
.pick .drop { background: #dcdcdc; border: 1px solid #a8a8a8; }
.tools .look { gap: 5px; padding: 0 6px 0 2px; }
.panes { flex: 1; min-height: 0; display: flex; gap: 4px; }
.parts { flex: none; width: 230px; padding: 6px 0 2px; display: flex; flex-direction: column; gap: 2px; }
.search { flex: none; height: 30px; display: flex; background: #fff; padding-left: 1px; border-right: 2px solid #a8a8b0; }
.search input { width: 196px; border: 1px solid #7a7a7a; border-radius: 0; padding: 0 0 2px 2px; font: inherit; background: #fff; }
.search input::placeholder { color: #757575; opacity: 1; }
.search button { flex: 1; display: flex; align-items: center; justify-content: center; }
.search .ic { width: 17px; height: 17px; }
.partbox { flex: 1; min-height: 0; display: flex; flex-direction: column; border: 1px solid #828790; border-right: 2px solid #9a9ca4; border-bottom: 3px solid #9a9ca4; background: #fff; }
.partbox .tree { flex: 1; padding: 1px 0 0; }
.partbox .node { padding-left: 8px; }
.partbox .chev { margin-right: 10px; }
.partbox .sq { width: 18px; height: 18px; margin-right: 6px; }
.partbox .tree ul li { padding-left: 55px; background-position: 39px 50%, 39px 0; }
.partbox ul ul svg { width: 14px; height: 14px; margin-right: 6px; }
.partbox .lbl { padding: 0 2px; height: 20px; }
.cur::before { content: ""; width: 5px; height: 20px; margin-left: -5px; background: #bdbdbd; }
.cur svg { background: #bdbdbd; box-shadow: 0 3px #bdbdbd, 0 -3px #bdbdbd, 7px 3px #bdbdbd, 7px -3px #bdbdbd; }
.cur .lbl { background: #2a5caa; color: #fff; box-shadow: 2px 0 #bdbdbd; }
.hscroll { height: 19px; margin: 0 1px 1px; display: flex; background: #f0f0f0; }
.hscroll button { width: 22px; display: flex; align-items: center; justify-content: center; }
.hscroll svg { width: 12px; height: 12px; }
.track { flex: 1; }
.thumb { width: 68%; height: 100%; background: #cdcdcd; }

.props { flex: 1; min-width: 0; display: flex; flex-direction: column; padding: 0 0 3px; background: #fff; border-left: 1px solid #d8d8d8; border-bottom: 1px solid #d8d8d8; }
.tabs { flex: none; height: 26px; display: flex; background: linear-gradient(#dcdcdc, #dcdcdc) 0 100% / 100% 1px no-repeat; }
.tabs button { width: 79px; background: #fff; border-right: 1px solid #d0d0d0; padding-right: 2px; }
.sheet { flex: 1; min-height: 0; margin: 4px 0 0 4px; padding-top: 1px; border: 1px solid #bcbcc4; border-right: 0; overflow: hidden; }
table { width: 462px; table-layout: fixed; border-collapse: collapse; }
.c1 { width: 27px; } .c2 { width: 239px; } .c3 { width: 157px; } .c4 { width: 39px; }
th, td { padding: 0; font-weight: normal; border: 1px solid #bdbdbd; white-space: nowrap; overflow: hidden; line-height: 20px; }
thead th { height: 28px; border-top: 0; background: linear-gradient(#fff, #efefef); }
thead .hot { background: linear-gradient(#f9d69c, #efbb5e); color: #701a5c; }
tbody tr { height: 24px; }
tbody tr:nth-child(4n) { height: 23px; }
tbody th { border-left: 0; text-align: center; background: linear-gradient(90deg, #fafafa, #efefef); }
thead th:first-child { border-left: 0; }
td:nth-child(2) { padding-left: 24px; }
td:nth-child(3) { padding-left: 2px; }
td:nth-child(4) { line-height: 0; text-align: center; }
.key { color: #00f; }
.ro td { color: #808080; }
.sel th { background: #ffd38a; color: #701a5c; }
.sel td:nth-child(2) { background: #0078d7; color: #fff; }
.sel td:nth-child(3) { background: #d8e9f8; }
.grp td { color: #808080; }
.grp td:nth-child(2) { padding-left: 2px; }
.grp button { width: 16px; height: 16px; margin-right: 6px; border: 1px solid #aaa; display: inline-flex; align-items: center; justify-content: center; vertical-align: middle; }
.grp svg { width: 13px; height: 13px; }
.sub td:nth-child(2) {
  padding-left: 36px;
  background: linear-gradient(#c0c0c0, #c0c0c0) 10px 50% / 21px 1px no-repeat, linear-gradient(#c0c0c0, #c0c0c0) 10px 0 / 1px 100% no-repeat;
}
.sub.last td:nth-child(2) { background-size: 21px 1px, 1px 50%; }
input[type="checkbox"] { appearance: none; margin: 0; width: 16px; height: 16px; border: 1px solid #333; background: #fff; vertical-align: middle; }

.status { flex: none; height: 28px; display: flex; align-items: stretch; padding: 0 0 3px; border-top: 1px solid #d4d4d4; line-height: 24px; white-space: nowrap; }
.status > span + span { border-left: 1px solid #d0d0d0; }
.status .m { line-height: 24px; }
.s0 { width: 187px; } .s1 { width: 99px; } .s2 { width: 125px; } .s3 { width: 63px; } .s4 { flex: 1; } .s5 { width: 80px; }
.status > .s1, .status > .s2, .status > .s3, .status > .s5 { padding-left: 1px; }
.under { flex: none; height: 8px; display: flex; padding-left: 60px; background: #dadbdd; }
.sheet1 { width: 429px; background: #fff; border: 1px solid #c4c4c4; border-bottom: 0; }
.sheet2 { width: 60px; margin-left: 373px; background: #e8e9eb; }

.ime { position: absolute; right: 69px; bottom: 112px; width: 139px; height: 30px; display: flex; align-items: center; padding: 0 9px 0 7px; gap: 10px; border-radius: 6px; background: #333; color: #ccc; font-size: 20px; }
.zh { width: 30px; height: 30px; }
.punct { width: 18px; height: 22px; }
.shirt { width: 26px; height: 22px; margin-left: -2px; }
.ime span { width: 20px; line-height: 30px; }
.handle { position: absolute; right: 0; bottom: 258px; width: 2px; height: 72px; border-radius: 2px 0 0 2px; background: #4a4a58; }
```
